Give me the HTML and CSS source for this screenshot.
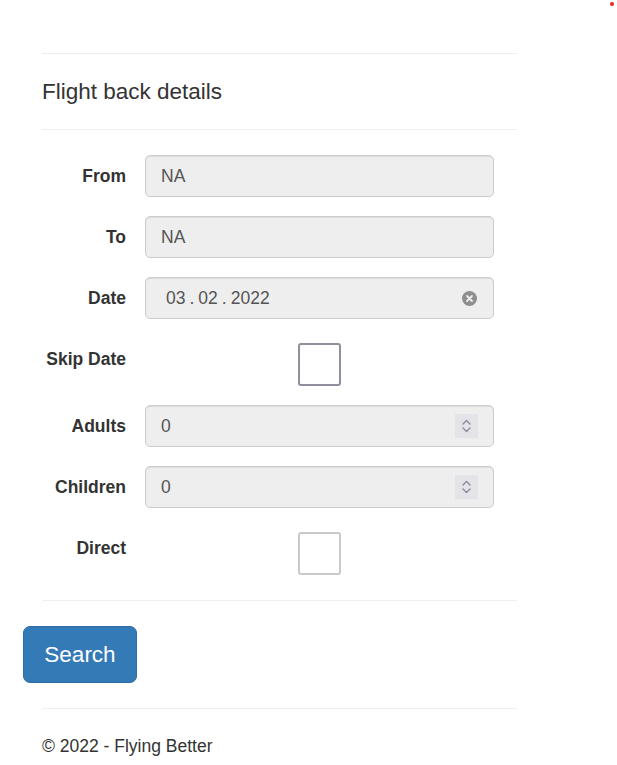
FILE: index.html
```html
<!DOCTYPE html>
<html>
<head>
<meta charset="utf-8">
<link rel="stylesheet" href="styles.css">
</head>
<body>
<span class="dot"></span>
<div class="page">
  <div class="section">
    <hr class="rule">
    <h4 class="title">Flight back details</h4>
    <hr class="rule">
    <form class="form">
      <div class="row">
        <label class="label">From</label>
        <div class="field"><div class="input">NA</div></div>
      </div>
      <div class="row">
        <label class="label">To</label>
        <div class="field"><div class="input">NA</div></div>
      </div>
      <div class="row">
        <label class="label">Date</label>
        <div class="field">
          <div class="input date">
            <span class="date-text">03<span class="sep">.</span>02<span class="sep">.</span>2022</span>
            <svg class="clear" width="15" height="15" viewBox="0 0 15 15"><circle cx="7.5" cy="7.5" r="7.5" fill="#8e8e8e"/><path d="M5 5L10 10M10 5L5 10" stroke="#eeeeee" stroke-width="1.8" stroke-linecap="round"/></svg>
          </div>
        </div>
      </div>
      <div class="row row-check">
        <label class="label">Skip Date</label>
        <div class="field center"><span class="check"></span></div>
      </div>
      <div class="row">
        <label class="label">Adults</label>
        <div class="field">
          <div class="input number">
            <span>0</span>
            <span class="spin"><svg width="11" height="16" viewBox="0 0 11 16"><path d="M2 6L5.5 2.5L9 6M2 10L5.5 13.5L9 10" fill="none" stroke="#8a8a9a" stroke-width="1.4" stroke-linecap="round" stroke-linejoin="round"/></svg></span>
          </div>
        </div>
      </div>
      <div class="row">
        <label class="label">Children</label>
        <div class="field">
          <div class="input number">
            <span>0</span>
            <span class="spin"><svg width="11" height="16" viewBox="0 0 11 16"><path d="M2 6L5.5 2.5L9 6M2 10L5.5 13.5L9 10" fill="none" stroke="#8a8a9a" stroke-width="1.4" stroke-linecap="round" stroke-linejoin="round"/></svg></span>
          </div>
        </div>
      </div>
      <div class="row row-check last">
        <label class="label">Direct</label>
        <div class="field center"><span class="check light"></span></div>
      </div>
    </form>
    <hr class="rule">
  </div>
  <button class="btn" type="button">Search</button>
  <div class="section">
    <hr class="rule">
    <footer class="footer">© 2022 - Flying Better</footer>
  </div>
</div>
</body>
</html>
```

FILE: styles.css
```css
html, body {
  margin: 0;
  padding: 0;
  background: #fff;
}
body {
  font-family: "Liberation Sans", Arial, sans-serif;
  font-size: 17.5px;
  line-height: 25px;
  color: #333;
  position: relative;
  width: 617px;
  height: 765px;
  overflow: hidden;
}
.dot {
  position: absolute;
  left: 610px;
  top: 2px;
  width: 4px;
  height: 4px;
  border-radius: 50%;
  background: #e8241c;
}
.page {
  padding: 53px 0 0 23px;
}
.section {
  margin-left: 19px;
  width: 475px;
}
.rule {
  margin: 0;
  border: 0;
  border-top: 1px solid #eeeeee;
  height: 0;
}
.title {
  margin: 25px 0;
  font-size: 22.5px;
  font-weight: normal;
  line-height: 25px;
  color: #333;
}
.form {
  margin: 25px 0;
  display: flex;
  flex-direction: column;
  gap: 19px;
}
.row {
  display: flex;
  align-items: flex-start;
  gap: 19px;
}
.label {
  width: 84px;
  text-align: right;
  font-weight: bold;
  padding-top: 8.5px;
  line-height: 25px;
  white-space: nowrap;
}
.field {
  width: 349px;
}
.field.center {
  display: flex;
  justify-content: center;
  padding-top: 5px;
}
.input {
  box-sizing: border-box;
  height: 42px;
  border: 1px solid #cccccc;
  border-radius: 5px;
  background: #eeeeee;
  color: #555;
  padding: 0 15px;
  display: flex;
  align-items: center;
  box-shadow: inset 0 1px 1px rgba(0,0,0,0.075);
}
.date, .number {
  justify-content: space-between;
}
.date-text {
  padding-left: 5px;
}
.sep {
  padding: 0 4px;
}
.clear {
  display: block;
  margin-right: 1px;
}
.spin {
  width: 23px;
  height: 24px;
  background: #e3e3e8;
  display: flex;
  align-items: center;
  justify-content: center;
}
.spin svg {
  display: block;
}
.check {
  box-sizing: border-box;
  width: 43px;
  height: 43px;
  border: 2px solid #8f8f9d;
  border-radius: 3px;
  background: #fff;
  display: block;
}
.check.light {
  border-color: #c9c9cd;
}
.btn {
  display: block;
  margin: 25px 0;
  box-sizing: border-box;
  width: 114px;
  height: 57px;
  padding: 0;
  font-family: "Liberation Sans", Arial, sans-serif;
  font-size: 22.5px;
  color: #fff;
  background: #337ab7;
  border: 1px solid #2e6da4;
  border-radius: 7px;
}
.footer {
  margin-top: 25px;
  line-height: 25px;
}
```
